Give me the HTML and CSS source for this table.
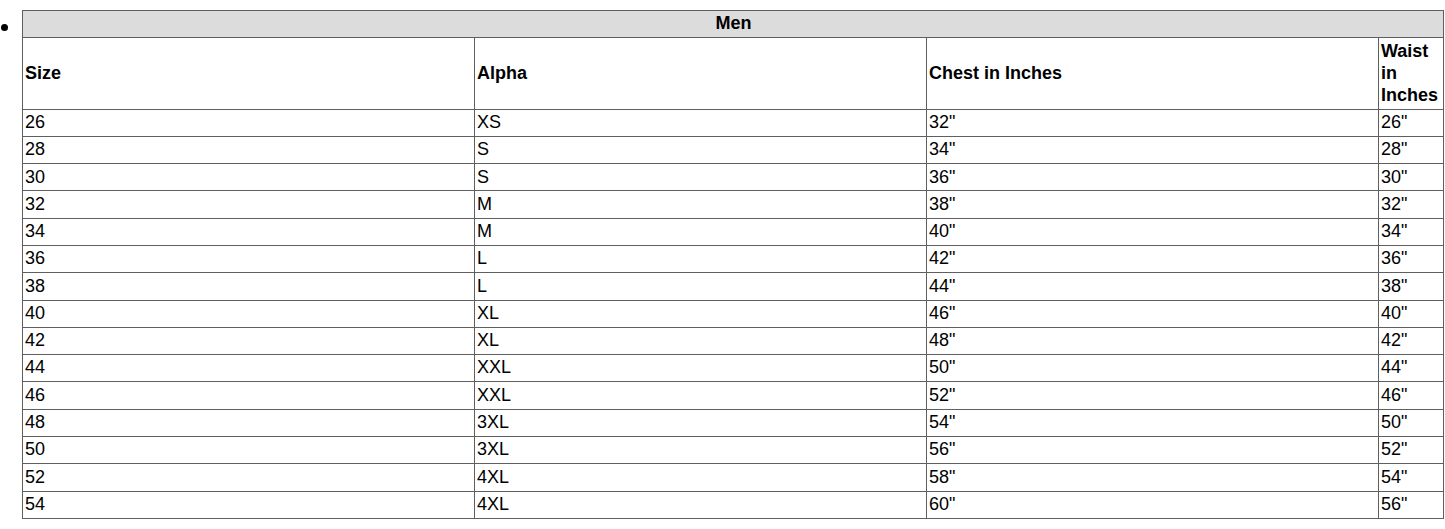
FILE: index.html
```html
<!DOCTYPE html>
<html>
<head>
<meta charset="utf-8">
<title>Size chart</title>
<link rel="stylesheet" href="styles.css">
</head>
<body>
<ul class="list">
<li class="item">
<table class="size-table">
<colgroup>
<col class="col-wide"><col class="col-wide"><col class="col-wide"><col class="col-narrow">
</colgroup>
<thead>
<tr><th class="group" colspan="4">Men</th></tr>
<tr><th>Size</th><th>Alpha</th><th>Chest in Inches</th><th><span class="stack">Waist in Inches</span></th></tr>
</thead>
<tbody>
<tr><td>26</td><td>XS</td><td>32"</td><td>26"</td></tr>
<tr><td>28</td><td>S</td><td>34"</td><td>28"</td></tr>
<tr><td>30</td><td>S</td><td>36"</td><td>30"</td></tr>
<tr><td>32</td><td>M</td><td>38"</td><td>32"</td></tr>
<tr><td>34</td><td>M</td><td>40"</td><td>34"</td></tr>
<tr><td>36</td><td>L</td><td>42"</td><td>36"</td></tr>
<tr><td>38</td><td>L</td><td>44"</td><td>38"</td></tr>
<tr><td>40</td><td>XL</td><td>46"</td><td>40"</td></tr>
<tr><td>42</td><td>XL</td><td>48"</td><td>42"</td></tr>
<tr><td>44</td><td>XXL</td><td>50"</td><td>44"</td></tr>
<tr><td>46</td><td>XXL</td><td>52"</td><td>46"</td></tr>
<tr><td>48</td><td>3XL</td><td>54"</td><td>50"</td></tr>
<tr><td>50</td><td>3XL</td><td>56"</td><td>52"</td></tr>
<tr><td>52</td><td>4XL</td><td>58"</td><td>54"</td></tr>
<tr><td>54</td><td>4XL</td><td>60"</td><td>56"</td></tr>
</tbody>
</table>
</li>
</ul>
</body>
</html>
```

FILE: styles.css
```css
html, body {
  margin: 0;
  padding: 0;
  background: #ffffff;
}
body {
  font-family: "Liberation Sans", Arial, sans-serif;
  font-size: 18px;
  color: #000;
}
.list {
  margin: 0;
  padding: 10px 0 0 22px;
  list-style: disc;
}
.item::marker {
  font-size: 24px;
}
.size-table {
  border-collapse: collapse;
  table-layout: fixed;
  width: 1421px;
  border: 1px solid #5f5f5f;
}
.col-wide { width: 452px; }
.col-narrow { width: 65px; }
.size-table th,
.size-table td {
  border: 1px solid #5f5f5f;
  padding: 1.4px 1px 2.9px 2px;
  line-height: 22px;
  text-align: left;
  vertical-align: middle;
}
.size-table th {
  font-weight: bold;
}
.size-table th.group {
  text-align: center;
  background: #dcdcdc;
}
.stack {
  display: block;
  width: min-content;
}
```
